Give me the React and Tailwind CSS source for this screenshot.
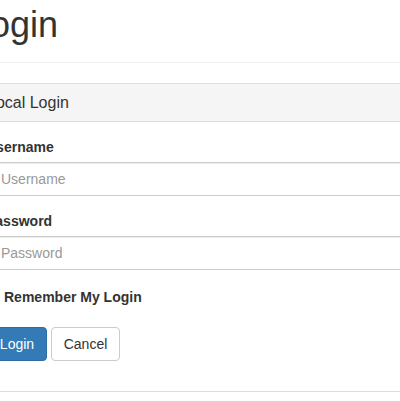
export default function App() {
  const font = { fontFamily: '"Liberation Sans", Arial, sans-serif' };
  return (
    <div className="w-[400px] h-[401px] overflow-hidden bg-white text-[#333]" style={font}>
      <div className="border-b border-[#eee] pt-[5px] pb-[17px]">
        <h1 className="ml-[-30px] text-[36px] leading-[40px] font-normal">Login</h1>
      </div>
      <div className="mt-[20px] ml-[-25px] w-[460px] border border-[#ddd] rounded-[4px]">
        <div className="h-[38px] flex items-center pt-[1px] pl-[11px] pr-[15px] bg-[#f5f5f5] border-b border-[#ddd] text-[16px]">
          Local Login
        </div>
        <div className="px-[15px] pt-[15px] pb-[30px]">
          <div className="mb-[15px]">
            <label className="block ml-[-5px] text-[14px] leading-[20px] font-bold mb-[5px]">Username</label>
            <input
              type="text"
              placeholder="Username"
              className="block ml-[-3px] w-[440px] h-[34px] px-[12px] text-[14px] border border-[#ccc] rounded-[4px] placeholder:text-[#999] shadow-[inset_0_1px_1px_rgba(0,0,0,0.075)] outline-none"
            />
          </div>
          <div className="mb-[17px]">
            <label className="block ml-[-5px] text-[14px] leading-[20px] font-bold mb-[5px]">Password</label>
            <input
              type="password"
              placeholder="Password"
              className="block ml-[-3px] w-[440px] h-[34px] px-[12px] text-[14px] border border-[#ccc] rounded-[4px] placeholder:text-[#999] shadow-[inset_0_1px_1px_rgba(0,0,0,0.075)] outline-none"
            />
          </div>
          <div className="flex items-center h-[20px] mb-[20px]">
            <input type="checkbox" className="w-[13px] h-[13px] ml-[-4px] mr-[4px] m-0" />
            <span className="text-[14px] leading-[20px] font-bold">Remember My Login</span>
          </div>
          <div className="flex gap-[4px] ml-[-4px]">
            <button className="w-[60px] h-[34px] text-[14px] text-white bg-[#337ab7] border border-[#2e6da4] rounded-[4px]">
              Login
            </button>
            <button className="w-[69px] h-[34px] text-[14px] text-[#333] bg-white border border-[#ccc] rounded-[4px]">
              Cancel
            </button>
          </div>
        </div>
      </div>
    </div>
  );
}
